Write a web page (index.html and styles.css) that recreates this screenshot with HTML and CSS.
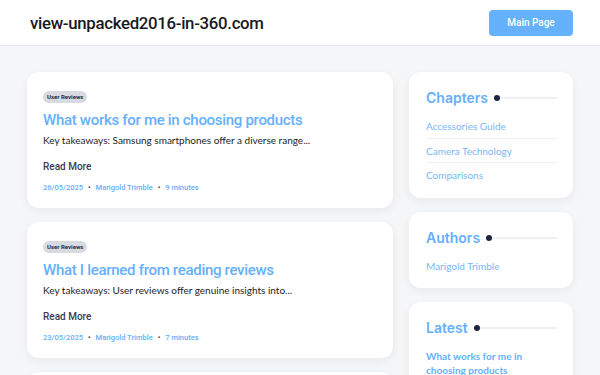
FILE: index.html
```html
<!DOCTYPE html>
<html lang="en">
<head>
  <meta charset="UTF-8" />
  <meta name="viewport" content="width=device-width, initial-scale=1.0"/>
  <title>view-unpacked2016-in-360.com</title>
  <link rel="stylesheet" href="styles.css">
</head>
<body>

  <header class="topbar">
    <div class="site-name">view-unpacked2016-in-360.com</div>
    <a class="main-btn" href="#">Main Page</a>
  </header>

  <div class="layout">
    <main class="posts">
      <article class="post">
        <span class="tag">User Reviews</span>
        <h2 class="post-title">What works for me in choosing products</h2>
        <p class="excerpt">Key takeaways: Samsung smartphones offer a diverse range...</p>
        <a class="read-more" href="#">Read More</a>
        <div class="meta">
          <span>26/05/2025</span><span class="sep">•</span><span>Marigold Trimble</span><span class="sep">•</span><span>9 minutes</span>
        </div>
      </article>

      <article class="post">
        <span class="tag">User Reviews</span>
        <h2 class="post-title">What I learned from reading reviews</h2>
        <p class="excerpt">Key takeaways: User reviews offer genuine insights into...</p>
        <a class="read-more" href="#">Read More</a>
        <div class="meta">
          <span>23/05/2025</span><span class="sep">•</span><span>Marigold Trimble</span><span class="sep">•</span><span>7 minutes</span>
        </div>
      </article>

      <article class="post">
        <span class="tag">User Reviews</span>
        <h2 class="post-title">What I look for in product reviews</h2>
      </article>
    </main>

    <aside class="sidebar">
      <div class="widget">
        <h3 class="widget-title">Chapters <span class="rule"></span></h3>
        <ul class="links">
          <li><a href="#">Accessories Guide</a></li>
          <li><a href="#">Camera Technology</a></li>
          <li><a href="#">Comparisons</a></li>
        </ul>
      </div>

      <div class="widget">
        <h3 class="widget-title">Authors <span class="rule"></span></h3>
        <ul class="links">
          <li><a href="#">Marigold Trimble</a></li>
        </ul>
      </div>

      <div class="widget">
        <h3 class="widget-title">Latest <span class="rule"></span></h3>
        <ul class="latest">
          <li><a href="#">What works for me in choosing products</a></li>
          <li><a href="#">What I learned from reading reviews</a></li>
        </ul>
      </div>
    </aside>
  </div>

</body>
</html>
```

FILE: styles.css
```css
body {
  margin: 0;
  font-family: 'Lato', sans-serif;
  background: #f5f6f8;
  color: #1c1c24;
}

a {
  text-decoration: none;
}

.topbar {
  height: 45px;
  background: #fff;
  border-bottom: 1px solid #e9eaee;
  display: flex;
  align-items: center;
  justify-content: space-between;
  padding: 0 27px 0 30px;
}

.site-name {
  font-family: 'Roboto', sans-serif;
  font-size: 16.8px;
  font-weight: 500;
  color: #18181f;
  letter-spacing: -0.3px;
}

.main-btn {
  width: 84px;
  height: 26px;
  line-height: 26px;
  text-align: center;
  background: #66b1fb;
  color: #fff;
  border-radius: 4px;
  font-family: 'Roboto', sans-serif;
  font-size: 10px;
  font-weight: 500;
}

.layout {
  display: flex;
  gap: 16px;
  padding: 26px 27px 0;
  align-items: flex-start;
}

.posts {
  width: 366px;
  display: flex;
  flex-direction: column;
  gap: 14px;
}

.post {
  background: #fff;
  border-radius: 12px;
  padding: 19px 16px 15px;
  display: flex;
  flex-direction: column;
  align-items: flex-start;
  box-shadow: 0 3px 10px rgba(20, 30, 60, 0.06);
}

.tag {
  background: #d9dae1;
  color: #2b2b38;
  font-family: 'Roboto', sans-serif;
  font-size: 6px;
  font-weight: 700;
  line-height: 8px;
  padding: 2px 4px;
  border-radius: 6px;
}

.post-title {
  margin: 7px 0 0;
  font-family: 'Roboto', sans-serif;
  font-size: 15px;
  line-height: 20px;
  font-weight: 500;
  color: #66b0fb;
  letter-spacing: -0.3px;
}

.excerpt {
  margin: 2.5px 0 0;
  font-size: 10px;
  line-height: 15px;
  color: #1c1c24;
}

.read-more {
  margin-top: 12.5px;
  font-family: 'Roboto', sans-serif;
  font-size: 10px;
  line-height: 14px;
  font-weight: 500;
  color: #3c3a57;
}

.meta {
  margin-top: 9px;
  font-family: 'Roboto', sans-serif;
  font-size: 7.5px;
  line-height: 10px;
  font-weight: 500;
  color: #66b0fb;
  display: flex;
  gap: 5px;
}

.meta .sep {
  color: #3c3a57;
}

.sidebar {
  width: 164px;
  display: flex;
  flex-direction: column;
  gap: 14px;
}

.widget {
  background: #fff;
  border-radius: 12px;
  padding: 17px 16px 11px 17px;
  box-shadow: 0 3px 10px rgba(20, 30, 60, 0.06);
}

.widget-title {
  margin: 0 0 7px;
  display: flex;
  align-items: center;
  gap: 5px;
  font-family: 'Inter', sans-serif;
  font-size: 14px;
  line-height: 18px;
  font-weight: 600;
  color: #66b0fb;
}

.rule {
  flex: 1;
  height: 2px;
  background: #eef0f3;
  position: relative;
  margin-left: 4px;
}

.rule::before {
  content: '';
  position: absolute;
  left: -3px;
  top: -2px;
  width: 6px;
  height: 6px;
  border-radius: 50%;
  background: #1e2340;
}

.links {
  list-style: none;
  margin: 0;
  padding: 0;
}

.links li {
  font-size: 10px;
  line-height: 12px;
  padding: 6px 0 5.5px;
  border-bottom: 1px solid #eef0f3;
}

.links li:last-child {
  border-bottom: none;
}

.links a {
  color: #78b6f8;
}

.latest {
  list-style: none;
  margin: 0;
  padding: 0;
}

.latest li {
  font-size: 10px;
  font-weight: 700;
  line-height: 14px;
  padding: 5px 30px 5px 0;
}

.latest a {
  color: #66b0fb;
}
```
